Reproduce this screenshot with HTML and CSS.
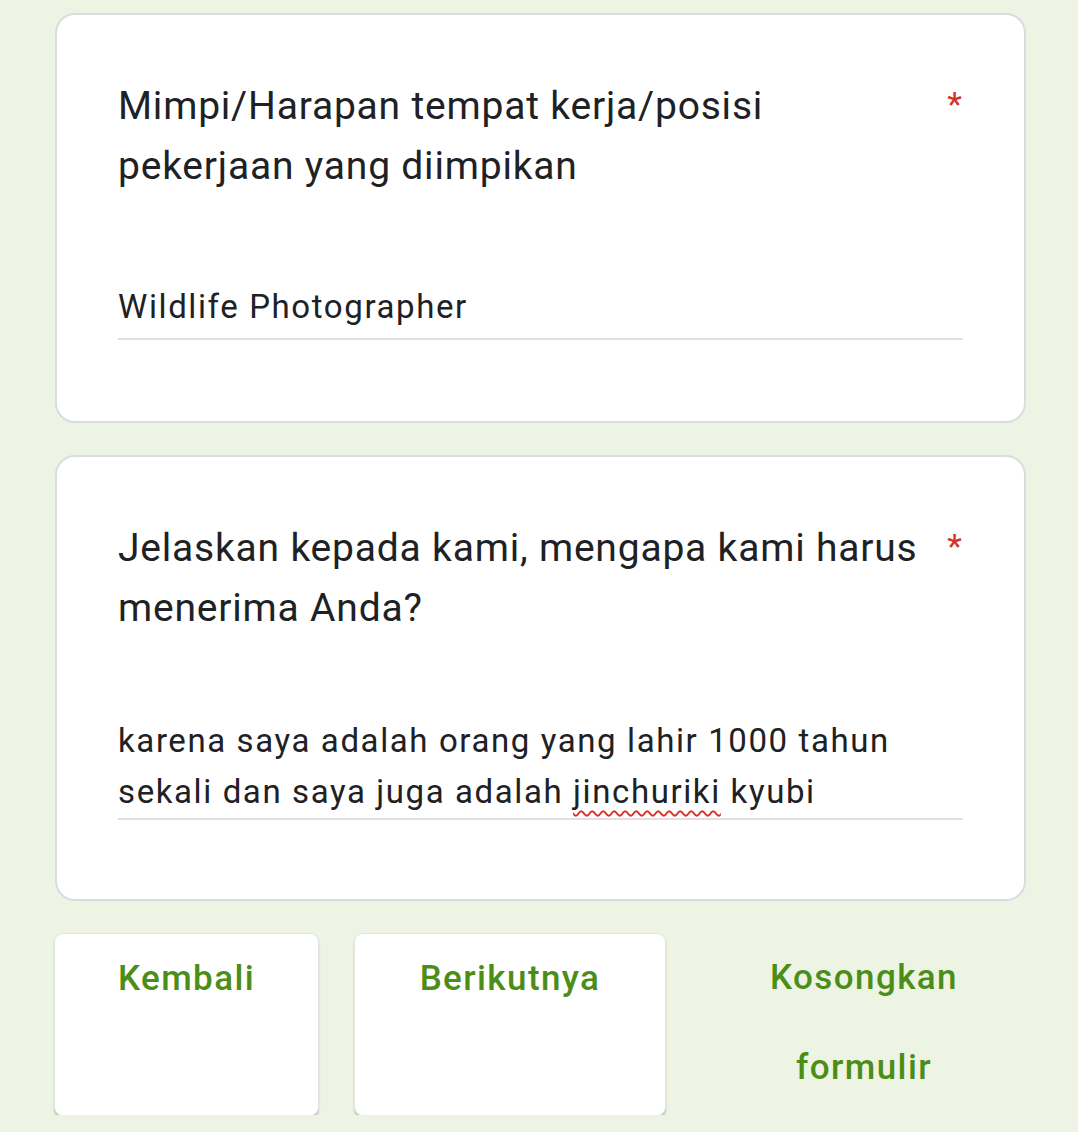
FILE: index.html
```html
<!DOCTYPE html>
<html lang="id">
<head>
  <meta charset="UTF-8" />
  <meta name="viewport" content="width=device-width, initial-scale=1.0" />
  <title>Formulir</title>
  <link rel="stylesheet" href="styles.css">
</head>
<body>
  <main class="form">
    <section class="card card-first">
      <div class="question">
        <h2>Mimpi/Harapan tempat kerja/posisi pekerjaan yang diimpikan</h2>
        <span class="required">*</span>
      </div>
      <div class="answer answer-short">Wildlife Photographer</div>
    </section>

    <section class="card card-second">
      <div class="question">
        <h2>Jelaskan kepada kami, mengapa kami harus menerima Anda?</h2>
        <span class="required">*</span>
      </div>
      <div class="answer answer-long">karena saya adalah orang yang lahir 1000 tahun sekali dan saya juga adalah <span class="misspelled">jinchuriki</span> kyubi</div>
    </section>

    <div class="actions">
      <button class="btn btn-back">Kembali</button>
      <button class="btn btn-next">Berikutnya</button>
      <button class="btn-text">Kosongkan formulir</button>
    </div>
  </main>
</body>
</html>
```

FILE: styles.css
```css
/* Base */
* {
  box-sizing: border-box;
  margin: 0;
  padding: 0;
}
body {
  font-family: Roboto, 'Noto Sans', sans-serif;
  background-color: #edf4e4;
  color: #202124;
}

.form {
  width: 971px;
  margin-left: 55px;
  padding-top: 13px;
}

/* Cards */
.card {
  background: #fff;
  border: 2px solid #dadce0;
  border-radius: 20px;
  padding: 61px 61px 0 61px;
}
.card-first {
  height: 410px;
}
.card-second {
  margin-top: 32px;
  height: 446px;
}

.question {
  display: flex;
  justify-content: space-between;
}
.question h2 {
  font-size: 39px;
  font-weight: 400;
  letter-spacing: 0.8px;
  line-height: 60px;
  width: 812px;
}
.required {
  color: #d93025;
  font-size: 34px;
  line-height: 56px;
  margin-right: 1px;
}

.answer {
  font-size: 33px;
  letter-spacing: 1.6px;
  line-height: 51px;
  border-bottom: 2px solid #e0e0e0;
}
.answer-short {
  margin-top: 85px;
  padding-bottom: 6px;
}
.answer-long {
  margin-top: 77px;
  padding-bottom: 1px;
}
.misspelled {
  text-decoration: underline wavy #d93025;
  text-decoration-thickness: 2px;
  text-underline-offset: 7px;
}

/* Buttons */
.actions {
  display: flex;
  margin-top: 33px;
  gap: 37px;
}
.btn,
.btn-text {
  font-family: Roboto, 'Noto Sans', sans-serif;
  font-size: 35px;
  font-weight: 500;
  letter-spacing: 1.4px;
  color: #4b8e17;
  line-height: 90px;
  background: none;
  border: none;
  text-align: center;
}
.btn {
  height: 181px;
  background: #fff;
  border-radius: 8px;
  align-self: flex-start;
  padding-bottom: 93px;
  box-shadow: 0 0 0 1px #e2e4e0, 0 3px 3px rgba(0,0,0,0.35);
}
.btn-back {
  width: 263px;
}
.btn-next {
  width: 310px;
}
.btn-text {
  width: 290px;
  margin-left: 17px;
  margin-top: -3px;
  padding: 0 30px;
}
```
